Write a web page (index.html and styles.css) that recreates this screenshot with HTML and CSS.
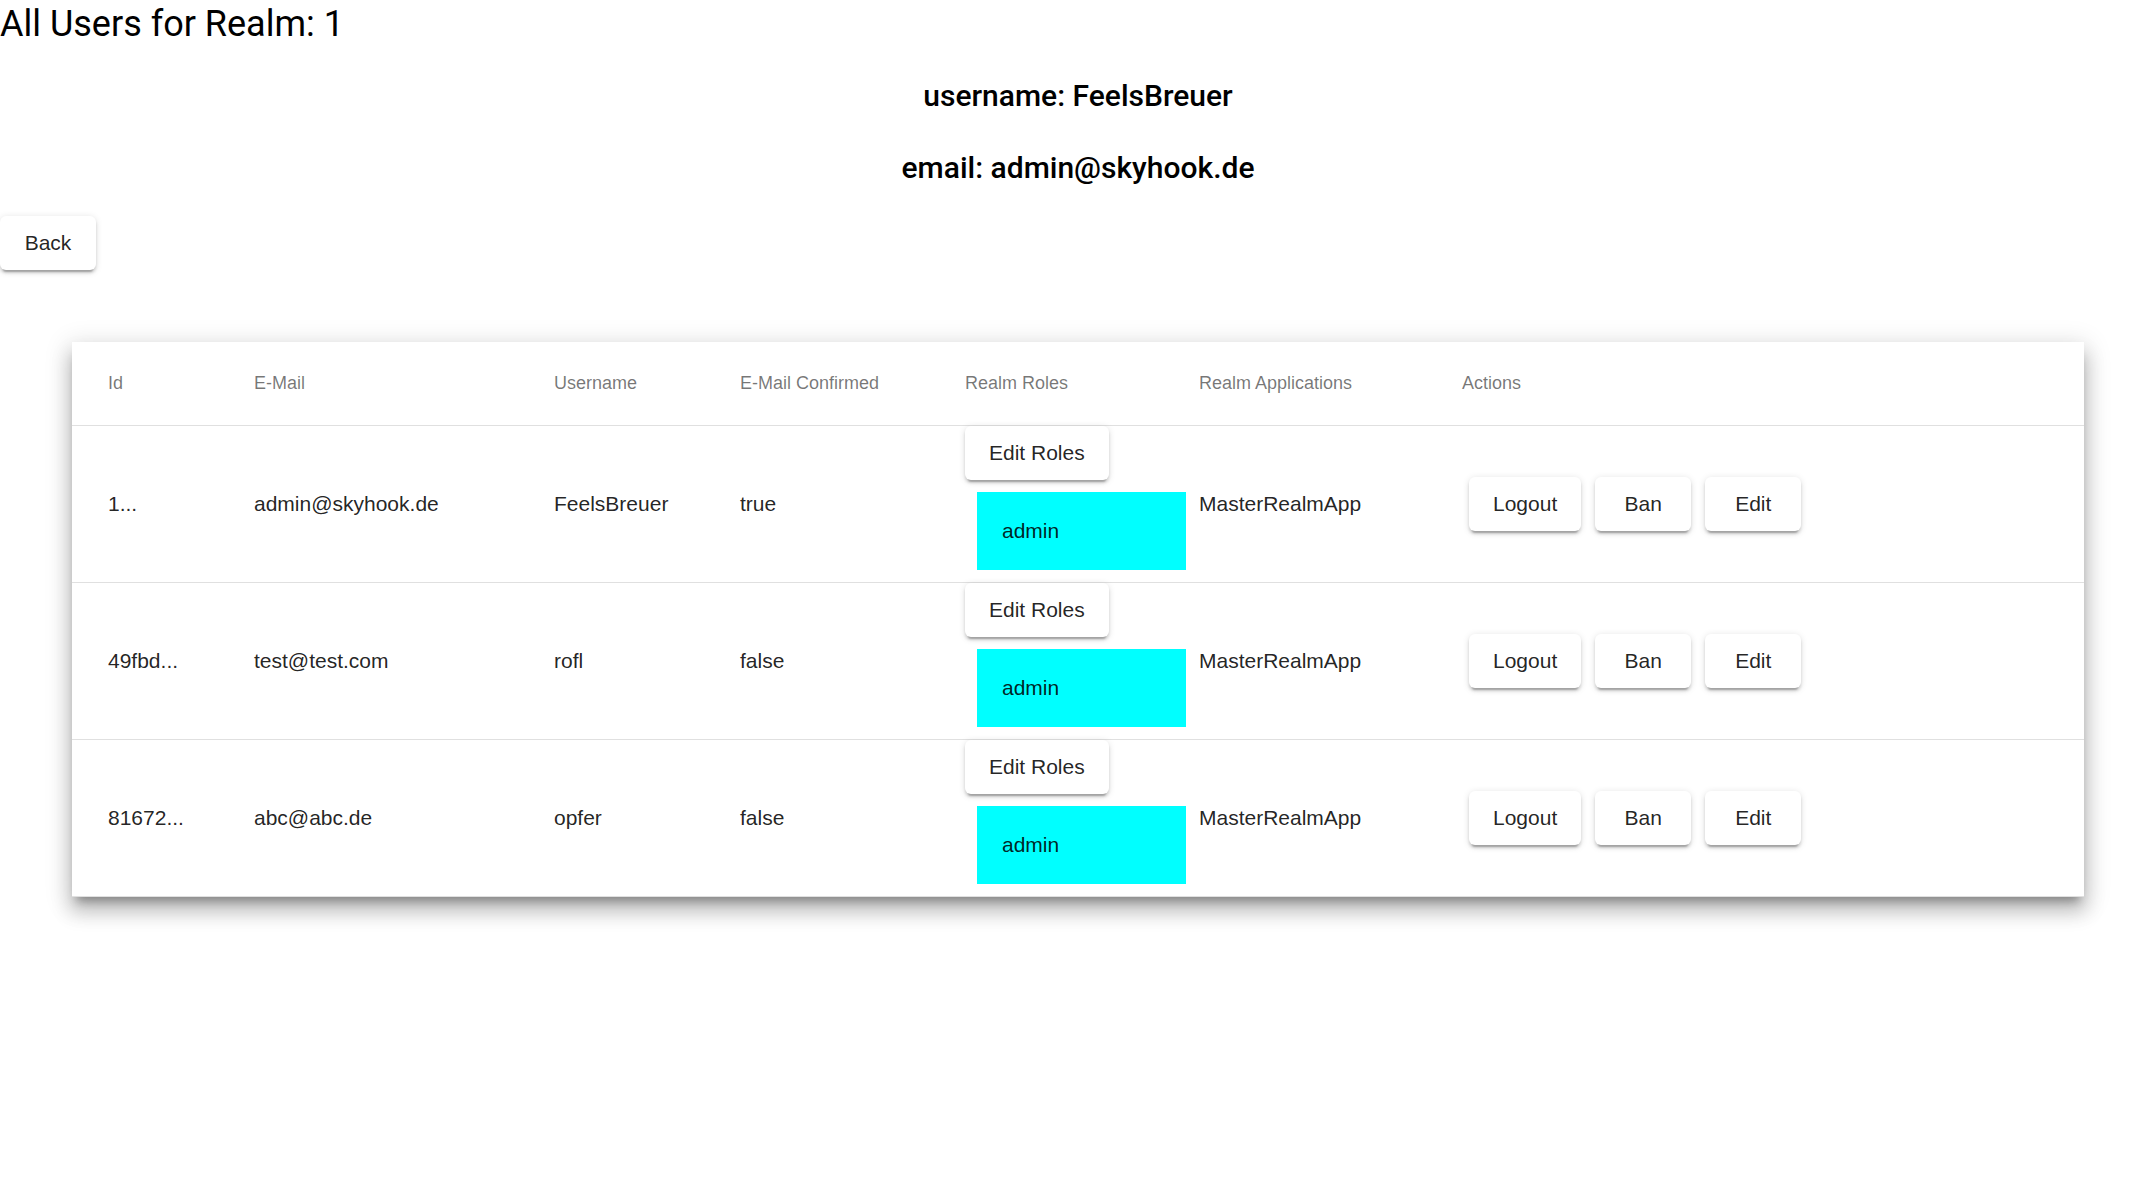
FILE: index.html
```html
<!DOCTYPE html>
<html lang="en">
<head>
    <meta charset="UTF-8">
    <meta name="viewport" content="width=device-width, initial-scale=1.0">
    <title>All Users for Realm</title>
    <link rel="stylesheet" href="styles.css">
</head>
<body>
    <h1 class="page-title">All Users for Realm: 1</h1>

    <div class="current-user">
        <h2>username: FeelsBreuer</h2>
        <h2>email: admin@skyhook.de</h2>
    </div>

    <button class="raised-btn">Back</button>

    <div class="users-table">
        <div class="table-row header-row">
            <div class="cell first">Id</div>
            <div class="cell">E-Mail</div>
            <div class="cell">Username</div>
            <div class="cell">E-Mail Confirmed</div>
            <div class="cell">Realm Roles</div>
            <div class="cell">Realm Applications</div>
            <div class="cell last">Actions</div>
        </div>

        <div class="table-row">
            <div class="cell first">1...</div>
            <div class="cell">admin@skyhook.de</div>
            <div class="cell">FeelsBreuer</div>
            <div class="cell">true</div>
            <div class="cell roles-cell">
                <button class="raised-btn">Edit Roles</button>
                <div class="role-item">admin</div>
            </div>
            <div class="cell">MasterRealmApp</div>
            <div class="cell last actions">
                <button class="raised-btn">Logout</button>
                <button class="raised-btn">Ban</button>
                <button class="raised-btn">Edit</button>
            </div>
        </div>

        <div class="table-row">
            <div class="cell first">49fbd...</div>
            <div class="cell">test@test.com</div>
            <div class="cell">rofl</div>
            <div class="cell">false</div>
            <div class="cell roles-cell">
                <button class="raised-btn">Edit Roles</button>
                <div class="role-item">admin</div>
            </div>
            <div class="cell">MasterRealmApp</div>
            <div class="cell last actions">
                <button class="raised-btn">Logout</button>
                <button class="raised-btn">Ban</button>
                <button class="raised-btn">Edit</button>
            </div>
        </div>

        <div class="table-row">
            <div class="cell first">81672...</div>
            <div class="cell">abc@abc.de</div>
            <div class="cell">opfer</div>
            <div class="cell">false</div>
            <div class="cell roles-cell">
                <button class="raised-btn">Edit Roles</button>
                <div class="role-item">admin</div>
            </div>
            <div class="cell">MasterRealmApp</div>
            <div class="cell last actions">
                <button class="raised-btn">Logout</button>
                <button class="raised-btn">Ban</button>
                <button class="raised-btn">Edit</button>
            </div>
        </div>
    </div>
</body>
</html>
```

FILE: styles.css
```css
html {
    background: #fff;
}
body {
    margin: 0;
    padding-bottom: 60px;
    font-family: Roboto, "Helvetica Neue", sans-serif;
    color: #000;
}
.page-title {
    margin: 0 0 24px;
    font-size: 36px;
    font-weight: 400;
    line-height: 48px;
}
.current-user {
    text-align: center;
}
.current-user h2 {
    margin: 0 0 24px;
    font-size: 30px;
    font-weight: 500;
    line-height: 48px;
}
.raised-btn {
    box-sizing: border-box;
    height: 54px;
    min-width: 96px;
    padding: 0 24px;
    border: none;
    border-radius: 6px;
    background: #fff;
    color: rgba(0, 0, 0, 0.87);
    font-family: "Liberation Sans", Arial, sans-serif;
    font-size: 21px;
    cursor: pointer;
    box-shadow: 0 4.5px 1.5px -3px rgba(0, 0, 0, 0.2),
                0 3px 3px 0 rgba(0, 0, 0, 0.14),
                0 1.5px 7.5px 0 rgba(0, 0, 0, 0.12);
}
.users-table {
    margin: 72px 72px 0;
    background: #fff;
    font-family: "Liberation Sans", Arial, sans-serif;
    box-shadow: 0 9px 9px -5px rgba(0, 0, 0, 0.3),
                0 14px 18px 2px rgba(0, 0, 0, 0.18),
                0 5px 24px 4px rgba(0, 0, 0, 0.12);
}
.table-row {
    box-sizing: border-box;
    display: grid;
    grid-template-columns: 182px 300px 186px 225px 234px 263px 1fr;
    align-items: center;
    min-height: 157px;
    border-bottom: 1px solid rgba(0, 0, 0, 0.12);
    font-size: 21px;
    color: rgba(0, 0, 0, 0.87);
}
.header-row {
    min-height: 84px;
    font-size: 18px;
    color: rgba(0, 0, 0, 0.54);
}
.cell.first {
    padding-left: 36px;
}
.cell.last {
    padding-right: 36px;
}
.roles-cell {
    display: flex;
    flex-direction: column;
    align-items: flex-start;
    align-self: stretch;
}
.role-item {
    box-sizing: border-box;
    width: 209px;
    height: 78px;
    margin: 12px 0 12px 12px;
    padding-left: 25px;
    display: flex;
    align-items: center;
    background: #00ffff;
}
.actions {
    display: flex;
    gap: 14px;
    padding-left: 7px;
}
```
